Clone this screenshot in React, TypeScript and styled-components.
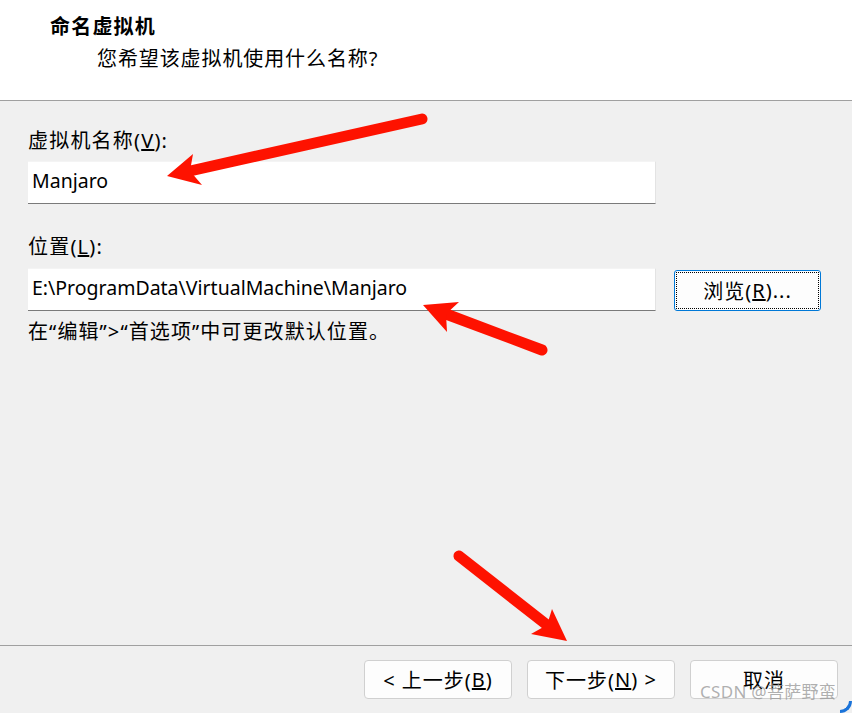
import React from "react";
import styled, { createGlobalStyle } from "styled-components";

const GlobalStyle = createGlobalStyle`
  html, body { margin: 0; padding: 0; background: #f0f0f0; }
  body { font-family: "Noto Sans", "Noto Sans CJK SC", sans-serif; }
`;

const Window = styled.div`
  position: relative;
  width: 852px;
  height: 713px;
  display: flex;
  flex-direction: column;
  background: #f0f0f0;
  overflow: hidden;
  font-family: "Noto Sans", "Noto Sans CJK SC", sans-serif;
  color: #000;
`;

const Header = styled.header`
  height: 101px;
  box-sizing: border-box;
  background: #fff;
  border-bottom: 1px solid #a0a0a0;
  padding: 12px 0 0 50px;
  display: flex;
  flex-direction: column;
  gap: 5px;
`;

const Title = styled.div`
  font-family: "Noto Sans CJK SC", sans-serif;
  font-weight: 700;
  font-size: 20px;
  line-height: 28px;
  letter-spacing: 1.2px;
`;

const Subtitle = styled.div`
  font-size: 20px;
  line-height: 28px;
  padding-left: 47px;
  letter-spacing: 0.9px;
`;

const Body = styled.main`
  flex: 1;
  display: flex;
  flex-direction: column;
  padding: 26px 28px 0 28px;
`;

const Label = styled.div<{ $gap: number }>`
  font-size: 20px;
  line-height: 28px;
  letter-spacing: 1.2px;
  margin-bottom: ${(p) => p.$gap}px;
`;

const Row = styled.div`
  display: flex;
  align-items: center;
  gap: 18px;
`;

const TextBox = styled.div`
  width: 628px;
  height: 43px;
  box-sizing: border-box;
  background: #fff;
  border-right: 1px solid #e3e3e3;
  border-top: 1px solid #f4f4f4;
  border-bottom: 1px solid #7a7a7a;
  padding: 0 0 5px 4px;
  display: flex;
  align-items: center;
  font-size: 19.5px;
`;

const Spacer = styled.div<{ $h: number }>`
  height: ${(p) => p.$h}px;
`;

const BrowseButton = styled.button`
  width: 147px;
  height: 41px;
  box-sizing: border-box;
  background: #fdfdfd;
  border: 1px solid #0078d7;
  border-radius: 3px;
  padding: 1px;
  font: inherit;
  cursor: default;
  margin-top: 1px;
`;

const FocusRing = styled.span`
  display: flex;
  align-items: center;
  justify-content: center;
  height: 100%;
  box-sizing: border-box;
  border: 1px dotted #000;
  font-size: 20px;
  letter-spacing: 1px;
`;

const Hint = styled.div`
  margin-top: 7px;
  font-size: 20px;
  line-height: 28px;
  letter-spacing: 1.1px;
`;

const Footer = styled.footer`
  height: 68px;
  box-sizing: border-box;
  border-top: 1px solid #a0a0a0;
  display: flex;
  justify-content: flex-end;
  align-items: flex-start;
  gap: 15px;
  padding: 14px 14px 0 0;
`;

const NavButton = styled.button`
  width: 148px;
  height: 39px;
  box-sizing: border-box;
  background: #fdfdfd;
  border: 1px solid #d0d0d0;
  border-radius: 4px;
  font: inherit;
  font-size: 20px;
  letter-spacing: 1px;
  color: #000;
  display: flex;
  align-items: center;
  justify-content: center;
  cursor: default;
`;

const Overlay = styled.svg`
  position: absolute;
  left: 0;
  top: 0;
  width: 852px;
  height: 713px;
  pointer-events: none;
`;

const Watermark = styled.div`
  position: absolute;
  left: 700px;
  top: 680px;
  font-size: 17px;
  line-height: 24px;
  color: rgba(150, 150, 150, 0.75);
  letter-spacing: 0.3px;
  white-space: nowrap;
`;

const Corner = styled.div`
  position: absolute;
  right: 0;
  bottom: 0;
  width: 12px;
  height: 12px;
  border-right: 3px solid #1a73d9;
  border-bottom: 3px solid #1a73d9;
  border-bottom-right-radius: 12px;
  box-sizing: border-box;
`;

type Pt = [number, number];

type ArrowProps = { tail: Pt; notch: Pt; tip: Pt; b1: Pt; b2: Pt };

const Arrow = ({ tail, notch, tip, b1, b2 }: ArrowProps) => (
  <g>
    <line
      x1={tail[0]}
      y1={tail[1]}
      x2={notch[0]}
      y2={notch[1]}
      stroke="#fe1200"
      strokeWidth={11}
      strokeLinecap="round"
    />
    <polygon
      points={`${tip[0]},${tip[1]} ${b1[0]},${b1[1]} ${notch[0]},${notch[1]} ${b2[0]},${b2[1]}`}
      fill="#fe1200"
    />
  </g>
);

export default function App() {
  return (
    <>
      <GlobalStyle />
      <Window>
        <Header>
          <Title>命名虚拟机</Title>
          <Subtitle>您希望该虚拟机使用什么名称?</Subtitle>
        </Header>
        <Body>
          <Label $gap={6}>
            虚拟机名称(<u>V</u>):
          </Label>
          <TextBox>Manjaro</TextBox>
          <Spacer $h={29} />
          <Label $gap={7}>
            位置(<u>L</u>):
          </Label>
          <Row>
            <TextBox>E:\ProgramData\VirtualMachine\Manjaro</TextBox>
            <BrowseButton>
              <FocusRing>
                浏览(<u>R</u>)...
              </FocusRing>
            </BrowseButton>
          </Row>
          <Hint>在“编辑”&gt;“首选项”中可更改默认位置。</Hint>
        </Body>
        <Footer>
          <NavButton>
            &lt; 上一步(<u>B</u>)
          </NavButton>
          <NavButton>
            下一步(<u>N</u>) &gt;
          </NavButton>
          <NavButton>取消</NavButton>
        </Footer>
        <Overlay viewBox="0 0 852 713">
          <Arrow tail={[422, 119]} notch={[190, 171]} tip={[167, 176]} b1={[193, 154]} b2={[202, 185]} />
          <Arrow tail={[542, 350]} notch={[446, 314]} tip={[423, 305]} b1={[459, 302]} b2={[447, 332]} />
          <Arrow tail={[459, 556]} notch={[547, 625]} tip={[567, 641]} b1={[552, 609]} b2={[531, 634]} />
        </Overlay>
        <Watermark>CSDN @菩萨野蛮</Watermark>
        <Corner />
      </Window>
    </>
  );
}
